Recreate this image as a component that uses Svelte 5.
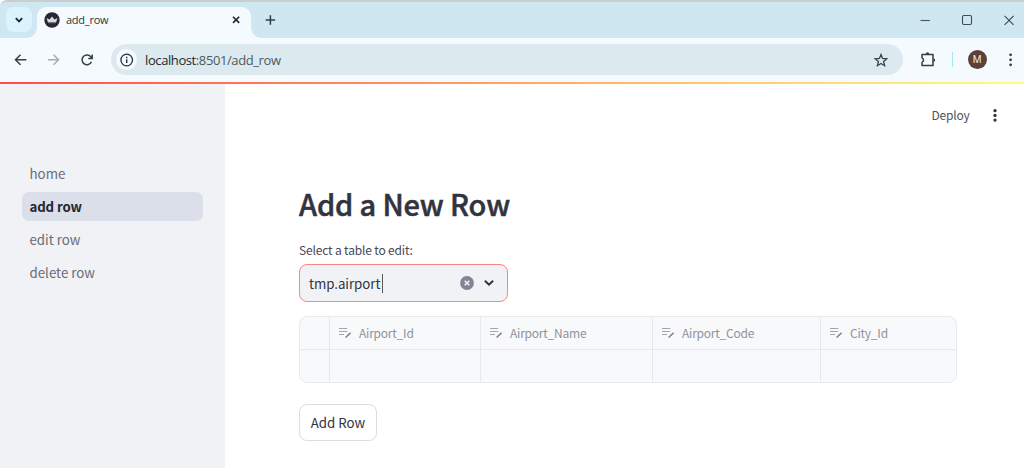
<script>
  const pages = ['home', 'add row', 'edit row', 'delete row'];
  const active = 'add row';
  const columns = ['Airport_Id', 'Airport_Name', 'Airport_Code', 'City_Id'];
</script>

<div class="browser">
  <div class="tabstrip">
    <div class="tabsearch">
      <svg width="10" height="8" viewBox="0 0 10 8"><path d="M1.8 2.2 5 5.4 8.2 2.2" fill="none" stroke="#17272e" stroke-width="1.8" /></svg>
    </div>
    <div class="tab">
      <svg width="16" height="16" viewBox="0 0 16 16">
        <circle cx="8" cy="8" r="7.7" fill="#262730" />
        <path d="M2.5 5.9 5.5 7.4 8 4.6l2.5 2.8 3-1.5-1.4 4.3H3.9Z" fill="#d8d9df" />
        <path d="M4 10.2h8v1H4Z" fill="#777882" />
      </svg>
      <span class="tabtitle">add_row</span>
      <svg width="10" height="10" viewBox="0 0 10 10"><path d="m2 1.7 6.2 6.2m0-6.2L2 7.9" stroke="#20262a" stroke-width="1.6" /></svg>
    </div>
    <svg class="newtab" width="12" height="12" viewBox="0 0 12 12"><path d="M6.4 1.3v9.4M1.7 6h9.4" stroke="#2f4047" stroke-width="1.5" /></svg>
    <div class="window">
      <svg width="12" height="12" viewBox="0 0 12 12"><path d="M1.5 6.5h9.3" stroke="#4a565b" stroke-width="1.1" /></svg>
      <svg width="12" height="12" viewBox="0 0 12 12"><rect x="1.5" y="1.5" width="9" height="9" rx="1.4" fill="none" stroke="#3f4c51" stroke-width="1.1" /></svg>
      <svg width="12" height="12" viewBox="0 0 12 12"><path d="m1.6 1.8 9 9m0-9-9 9" stroke="#3f4c51" stroke-width="1.1" /></svg>
    </div>
  </div>

  <div class="toolbar">
    <svg class="nav" width="14" height="14" viewBox="0 0 14 14"><path d="M12.3 6.8H1.7M6.5 1.8l-5 5 5 5" fill="none" stroke="#2f4047" stroke-width="1.5" /></svg>
    <svg class="nav" width="14" height="14" viewBox="0 0 14 14"><path d="M1 6.8h10.3M6.5 1.8l5 5-5 5" fill="none" stroke="#a5abae" stroke-width="1.5" /></svg>
    <svg class="nav" width="14" height="14" viewBox="0 0 14 14"><path d="M11.5 8.8A4.9 4.9 0 1 1 11.1 4.1L12 5.2M12.2 1.4v4H8.3" fill="none" stroke="#2f4047" stroke-width="1.5" /></svg>
    <div class="address">
      <span class="info">
        <svg width="14" height="14" viewBox="0 0 14 14"><circle cx="6.7" cy="7" r="5.8" fill="none" stroke="#27343a" stroke-width="1.3" /><path d="M6.7 6.3v3.8M6.7 3.7v1.5" stroke="#27343a" stroke-width="1.4" /></svg>
      </span>
      <span class="url"><b>localhost</b>:8501/add_row</span>
      <svg width="16" height="16" viewBox="0 0 16 16"><path d="m8 2.5 1.6 3.9 4.2.4-3.2 2.7 1 4.2L8 11.4l-3.6 2.3 1-4.2-3.2-2.7L6.4 6.4Z" fill="none" stroke="#34444b" stroke-width="1.3" /></svg>
    </div>
    <svg class="puzzle" width="18" height="18" viewBox="0 0 18 18">
      <path d="M3 3.5h11v11.1H3v-3.3q1.5-.8 1.5-2.25T3 6.8Z" fill="none" stroke="#2f4047" stroke-width="1.5" stroke-linejoin="round" />
      <path d="M6.8 3a1.7 1.7 0 0 1 3.4 0ZM14.5 7.4a1.7 1.7 0 0 1 0 3.4Z" fill="#2f4047" />
    </svg>
    <span class="divider"></span>
    <span class="avatar">M</span>
    <svg class="menu" width="4" height="14" viewBox="0 0 4 14" fill="#2f4047"><circle cx="1.6" cy="1.8" r="1.4" /><circle cx="1.6" cy="6.8" r="1.4" /><circle cx="1.6" cy="11.8" r="1.4" /></svg>
  </div>
  <div class="decoration"></div>
</div>

<div class="app">
  <nav class="sidebar">
    {#each pages as page}
      <a class:active={page === active} href="#{page}">{page}</a>
    {/each}
  </nav>

  <main>
    <header>
      <span>Deploy</span>
      <svg width="6" height="14" viewBox="0 0 6 14" fill="#31333f"><circle cx="3" cy="2.7" r="1.65" /><circle cx="3" cy="7.4" r="1.65" /><circle cx="3" cy="12.1" r="1.65" /></svg>
    </header>
    <section>
      <h1>Add a New Row</h1>
      <div class="label">Select a table to edit:</div>
      <div class="select">
        <span class="value">tmp.airport</span>
        <span class="caret"></span>
        <svg class="clear" width="14" height="14" viewBox="0 0 14 14"><circle cx="7" cy="7" r="6.9" fill="#808495" /><path d="m4.7 4.7 4.6 4.6m0-4.6L4.7 9.3" stroke="#f0f2f6" stroke-width="1.6" /></svg>
        <svg width="12" height="8" viewBox="0 0 12 8"><path d="M1.9 1.7 6 5.6l4.1-3.9" fill="none" stroke="#31333f" stroke-width="2" /></svg>
      </div>

      <div class="grid">
        <div class="cell head"></div>
        {#each columns as column}
          <div class="cell head">
            <svg width="14" height="12" viewBox="0 0 14 12"><path d="M1 1.5h8.2M1 4.5h8.2M1 7.5h5" stroke="#a3a6ad" stroke-width="1.1" /><path d="m7.6 10.5 4.9-4.7" stroke="#84878f" stroke-width="1.7" /></svg>
            <span>{column}</span>
          </div>
        {/each}
        <div class="cell"></div>
        {#each columns as column}
          <div class="cell"></div>
        {/each}
      </div>

      <button>Add Row</button>
    </section>
  </main>
</div>

<style>
  :global(body) {
    margin: 0;
    overflow: hidden;
    background: #fff;
  }
  svg {
    display: block;
    flex: none;
  }
  .browser {
    height: 84px;
    background: #f4fafd;
    font-family: 'Noto Sans', sans-serif;
  }
  .tabstrip {
    box-sizing: border-box;
    height: 38px;
    display: flex;
    align-items: flex-start;
    padding-left: 6px;
    border-top: 2px solid #cbced0;
    border-top-left-radius: 7px;
    background: #cfe7f0;
  }
  .tabsearch {
    width: 26px;
    height: 25px;
    margin-top: 5px;
    border-radius: 8px;
    background: #daf3fd;
    display: grid;
    place-items: center;
  }
  .tab {
    position: relative;
    box-sizing: border-box;
    width: 214px;
    height: 31px;
    margin: 5px 0 0 5px;
    padding: 0 10px 5px 7px;
    display: flex;
    align-items: center;
    border-radius: 9px 9px 0 0;
    background: #f4fafd;
  }
  .tab::before,
  .tab::after {
    content: '';
    position: absolute;
    bottom: 0;
    width: 10px;
    height: 10px;
  }
  .tab::before {
    left: -10px;
    background: radial-gradient(circle at 0 0, transparent 9.5px, #f4fafd 10px);
  }
  .tab::after {
    right: -10px;
    background: radial-gradient(circle at 100% 0, transparent 9.5px, #f4fafd 10px);
  }
  .tabtitle {
    flex: 1;
    margin-left: 6px;
    color: #30373a;
    font-family: 'Open Sans', sans-serif;
    font-size: 11px;
    letter-spacing: -0.25px;
    line-height: 16px;
  }
  .newtab {
    margin: 12px 0 0 13px;
  }
  .window {
    display: flex;
    gap: 30px;
    margin: 12px 9px 0 auto;
  }
  .toolbar {
    box-sizing: border-box;
    height: 44px;
    display: flex;
    align-items: center;
    padding: 0 0 1px 14px;
  }
  .nav {
    margin-right: 19px;
  }
  .address {
    box-sizing: border-box;
    width: 792px;
    height: 31px;
    margin-left: -2px;
    padding: 0 14px 0 5px;
    display: flex;
    align-items: center;
    border-radius: 16px;
    background: #dceaef;
  }
  .info {
    width: 21px;
    height: 21px;
    display: grid;
    place-items: center;
    border-radius: 50%;
    background: #f4fafd;
  }
  .url {
    flex: 1;
    margin-left: 8px;
    color: #4c5a60;
    font-family: 'Open Sans', sans-serif;
    font-size: 13px;
    letter-spacing: -0.4px;
    line-height: 20px;
  }
  .url b {
    font-weight: 400;
    color: #20292d;
  }
  .puzzle {
    margin-left: 16px;
  }
  .divider {
    width: 1px;
    height: 15px;
    margin-left: 15px;
    background: #a9e4f7;
  }
  .avatar {
    width: 19px;
    height: 19px;
    margin-left: 14.5px;
    border-radius: 50%;
    background: #5d4037;
    color: #eee5e2;
    font: 10px/19px Roboto, sans-serif;
    text-align: center;
  }
  .menu {
    margin-left: 22px;
  }
  .decoration {
    height: 2px;
    background: linear-gradient(90deg, #ff4b4b, #fffd80);
  }
  .app {
    height: 384px;
    display: flex;
    color: #31333f;
    font-family: 'Noto Sans CJK SC', 'Noto Sans', sans-serif;
  }
  .sidebar {
    box-sizing: border-box;
    width: 225px;
    padding: 74.5px 22px 0;
    display: flex;
    flex-direction: column;
    gap: 3.5px;
    background: #f0f2f6;
  }
  .sidebar a {
    height: 29.7px;
    padding-left: 7.5px;
    border-radius: 7px;
    color: #6a6c76;
    font-size: 13.3px;
    line-height: 29px;
    text-decoration: none;
  }
  .sidebar a.active {
    background: #dadfea;
    color: #262730;
    font-weight: 600;
    letter-spacing: -0.15px;
  }
  main {
    flex: 1;
    min-width: 0;
  }
  header {
    height: 62px;
    padding-right: 26px;
    display: flex;
    align-items: center;
    justify-content: flex-end;
    gap: 22.5px;
    font-size: 12px;
    letter-spacing: -0.2px;
    color: #50525c;
  }
  header span {
    margin-top: -1px;
  }
  section {
    width: 658px;
    margin-left: 74px;
    padding-top: 32px;
  }
  h1 {
    margin: 0;
    height: 50px;
    font-size: 29px;
    font-weight: 500;
    letter-spacing: -0.15px;
    -webkit-text-stroke: 0.5px #31333f;
    line-height: 50px;
    white-space: nowrap;
  }
  .label {
    height: 20px;
    margin-top: 12px;
    font-size: 12px;
    letter-spacing: -0.16px;
    line-height: 20px;
    color: #464852;
  }
  .select {
    box-sizing: border-box;
    width: 209px;
    height: 38px;
    margin-top: 4px;
    padding: 0 12px 0 9px;
    display: flex;
    align-items: center;
    border: 1px solid #fb8587;
    border-radius: 8px;
    background: #f0f2f6;
    font-size: 13.3px;
  }
  .value {
    letter-spacing: -0.05px;
  }
  .caret {
    width: 1px;
    height: 19px;
    margin-left: 1.5px;
    background: #555761;
  }
  .clear {
    margin: 0 9px 0 auto;
  }
  .grid {
    box-sizing: border-box;
    width: 658px;
    height: 67px;
    margin-top: 14px;
    display: grid;
    grid-template-columns: 30px 151px 172px 168px 1fr;
    grid-template-rows: 33px 1fr;
    overflow: hidden;
    border: 1px solid #e9eaed;
    border-radius: 8px;
    background: #f8f9fb;
  }
  .cell {
    display: flex;
    align-items: center;
    border-right: 1px solid #e7e8eb;
  }
  .cell:nth-child(5n) {
    border-right: 0;
  }
  .head {
    padding-left: 8px;
    gap: 7px;
    border-bottom: 1px solid #e7e8eb;
    color: #90939a;
    font-size: 12px;
    letter-spacing: -0.22px;
    line-height: 18px;
  }
  button {
    box-sizing: border-box;
    width: 78px;
    height: 37px;
    margin-top: 21px;
    padding: 0;
    display: block;
    border: 1px solid #dcdddf;
    border-radius: 8px;
    background: #fff;
    color: #31333f;
    font-family: inherit;
    font-size: 13.3px;
    white-space: nowrap;
  }
</style>
